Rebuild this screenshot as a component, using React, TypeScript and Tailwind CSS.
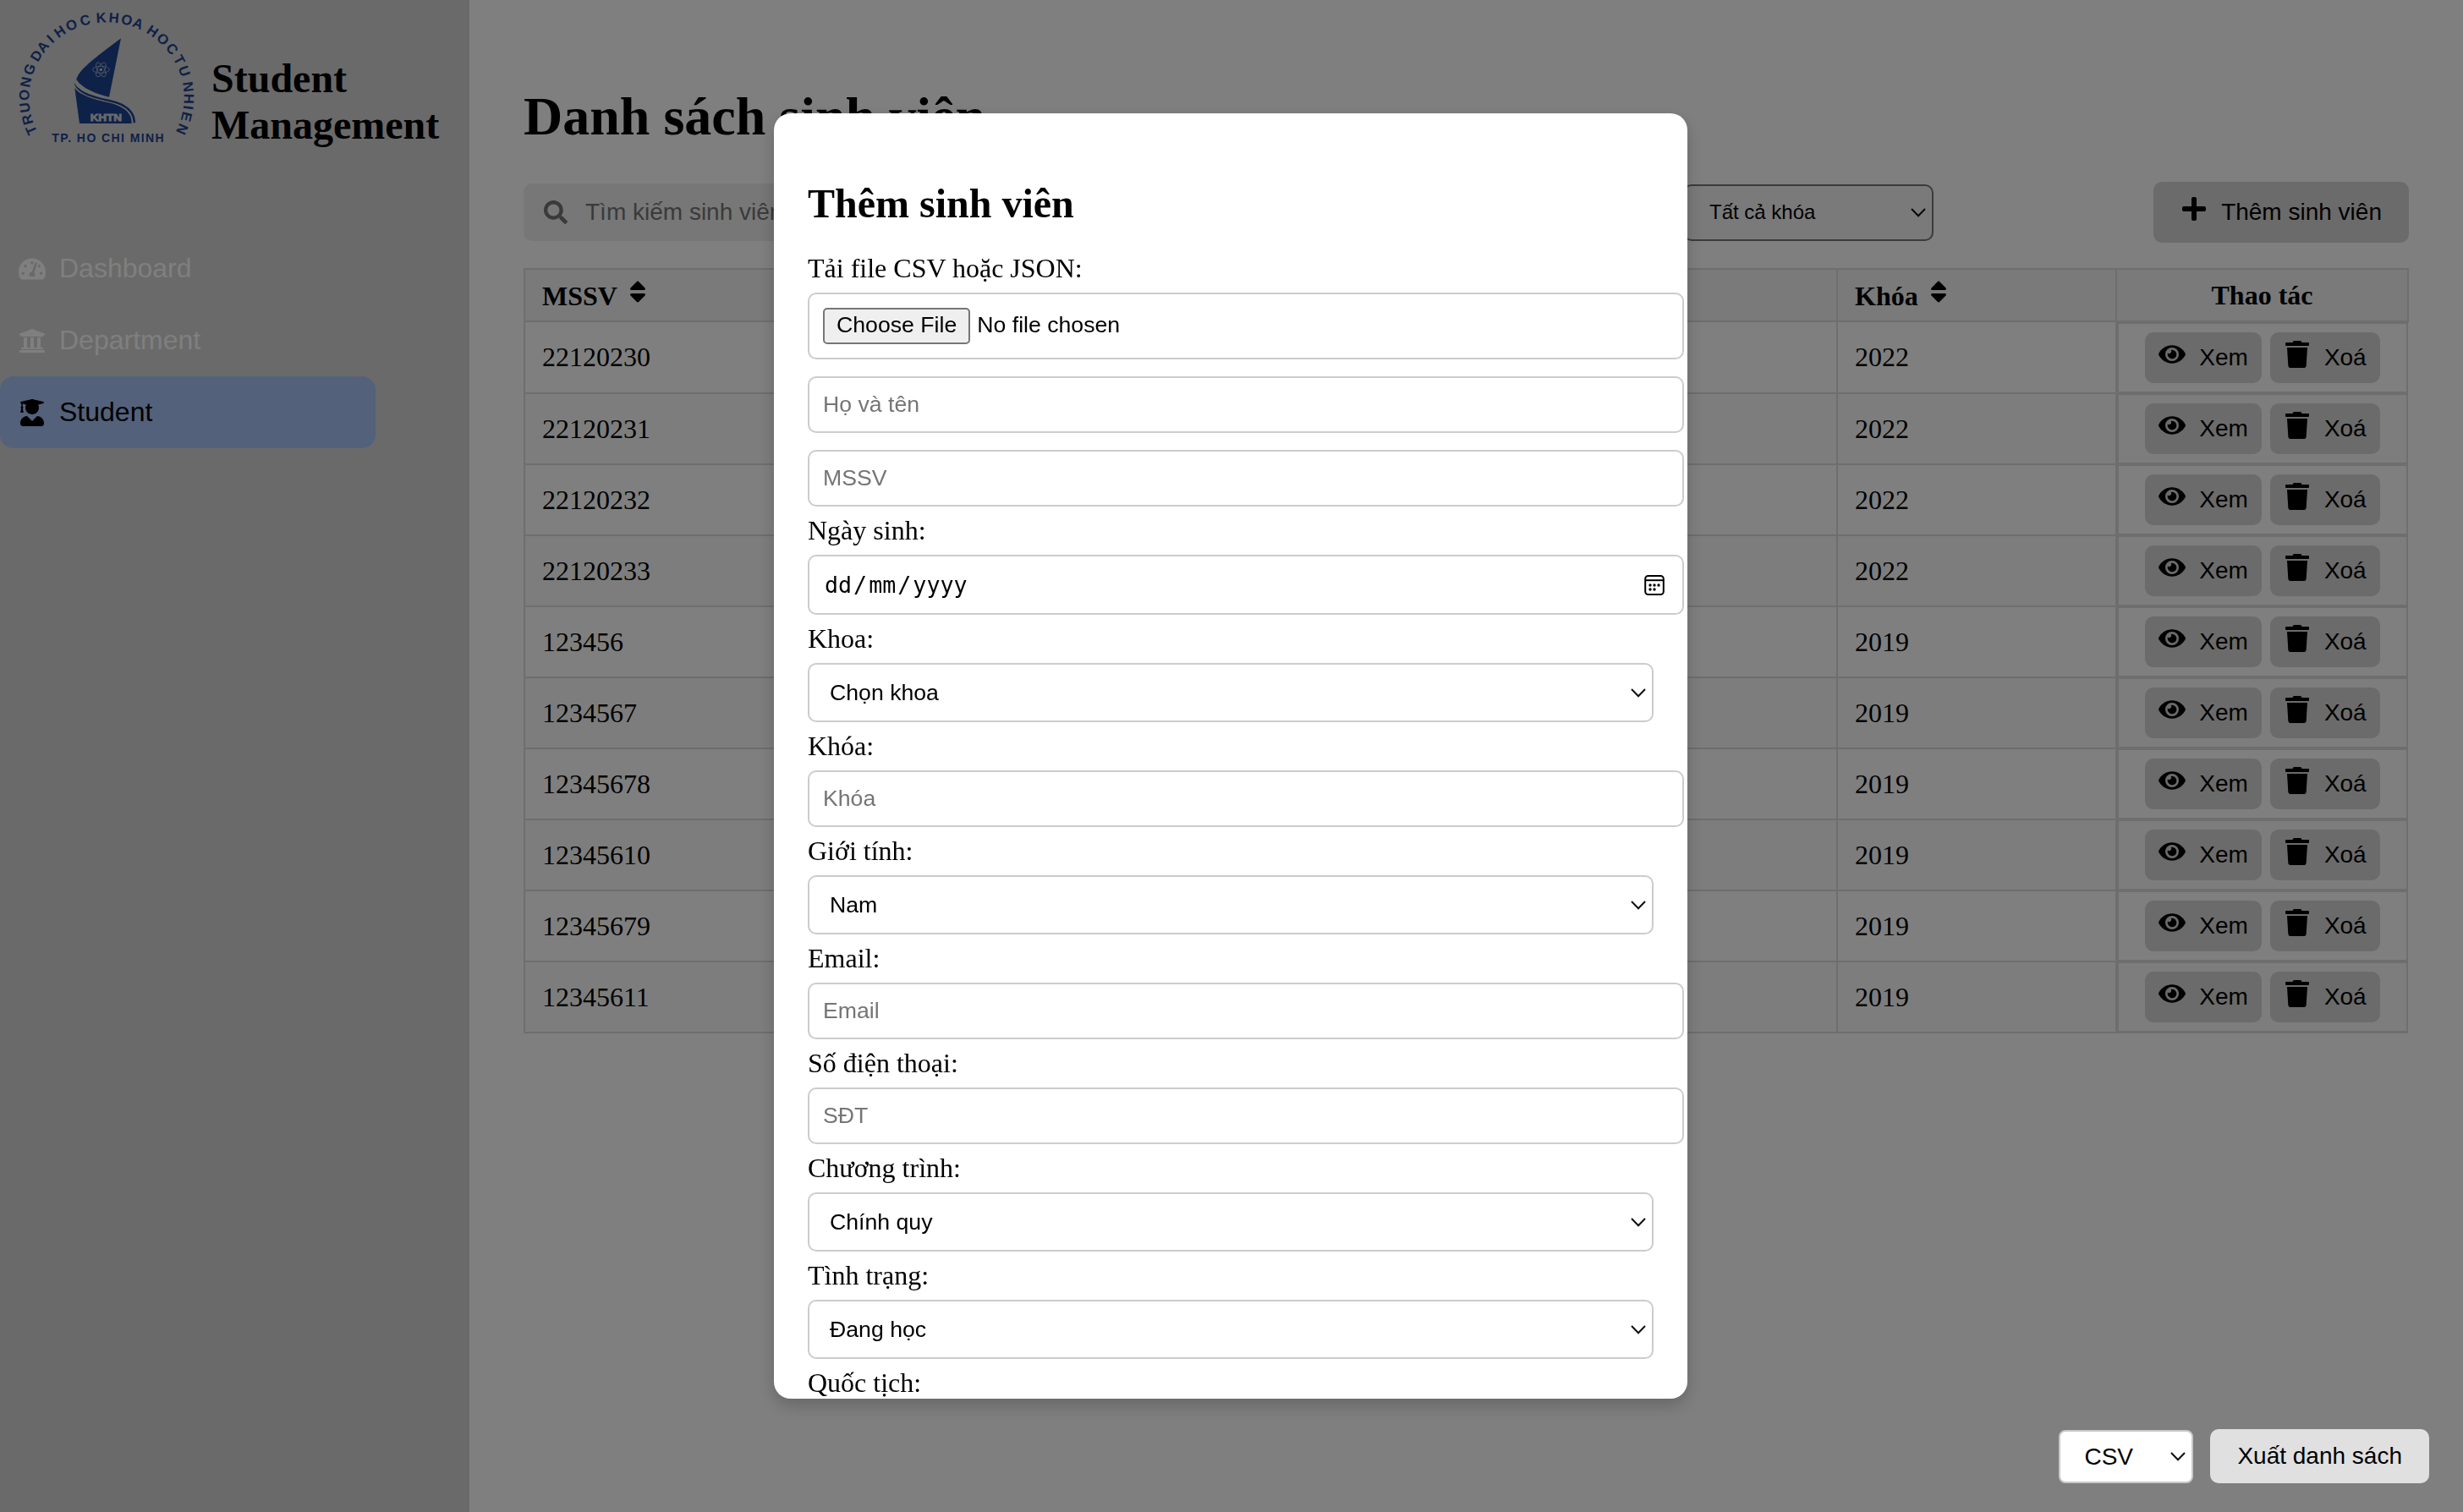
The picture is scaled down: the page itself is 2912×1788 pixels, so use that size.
import React from "react";
import {
  FaTachometerAlt,
  FaUniversity,
  FaUserGraduate,
  FaSearch,
  FaSort,
  FaPlus,
  FaEye,
  FaTrash,
} from "react-icons/fa";

const students = [
  { id: "22120230", year: "2022" },
  { id: "22120231", year: "2022" },
  { id: "22120232", year: "2022" },
  { id: "22120233", year: "2022" },
  { id: "123456", year: "2019" },
  { id: "1234567", year: "2019" },
  { id: "12345678", year: "2019" },
  { id: "12345610", year: "2019" },
  { id: "12345679", year: "2019" },
  { id: "12345611", year: "2019" },
];

const ARC_TEXT = "TRUONG DAI HOC KHOA HOC TU NHIEN";
// Angle of each glyph's centre, clockwise from the left end of the ring.
const ARC_ANGLES = [
  -24, -16.1, -7.3, 1.8, 11.2, 20.6, 26, 31.5, 39.4, 47, 51, 55.4, 64.8, 74.9, 80,
  86.3, 95.1, 104.3, 112.5, 118, 124, 133.2, 142.7, 147, 152, 160.8, 166, 172.4,
  181, 187.3, 193.8, 203.3,
];
const ADVANCE: Record<string, number> = {
  T: 0.611, R: 0.722, U: 0.722, O: 0.778, N: 0.722, G: 0.778, D: 0.722, A: 0.722,
  I: 0.278, H: 0.722, C: 0.722, K: 0.722, E: 0.667, " ": 0.278,
};

function Logo() {
  const size = 50;
  const glyphs = ARC_ANGLES.map((deg, i) => {
    const a = (deg * Math.PI) / 180;
    const rot = deg - 90;
    const r = (rot * Math.PI) / 180;
    const half = (ADVANCE[ARC_TEXT[i]] * size) / 2;
    return {
      x: 348 - 275 * Math.cos(a) - half * Math.cos(r),
      y: 331 - 267 * Math.sin(a) - half * Math.sin(r),
      rot,
    };
  });
  return (
    <svg
      viewBox="0 0 720 525"
      className="h-[175px] w-[240px] shrink-0 font-['Liberation_Sans',sans-serif] font-bold"
      fill="#1c4290"
    >
      <text
        fontSize={size}
        x={glyphs.map((g) => g.x.toFixed(1)).join(" ")}
        y={glyphs.map((g) => g.y.toFixed(1)).join(" ")}
        rotate={glyphs.map((g) => g.rot.toFixed(1)).join(" ")}
      >
        {ARC_TEXT}
      </text>
      <path d="M399 121 L357 329 C312 318 262 300 241 267 C248 235 300 195 399 121 Z" />
      <path d="M232 277 C248 310 302 328 357 338 C425 352 452 385 450 421 L443 421 C442 385 418 359 354 345 C298 333 240 318 232 277 Z" />
      <path d="M235 297 C252 322 300 337 350 348 C410 361 438 385 437 423 L252 423 Z" />
      <g stroke="#a9b8d4" strokeWidth="2.4" fill="none">
        <ellipse cx="328" cy="232" rx="30" ry="12" />
        <ellipse cx="328" cy="232" rx="28" ry="12" transform="rotate(60 328 232)" />
        <ellipse cx="328" cy="232" rx="28" ry="12" transform="rotate(120 328 232)" />
      </g>
      <circle cx="328" cy="232" r="5" fill="#c8d0e0" />
      <text
        x="290"
        y="414"
        fontSize="34"
        textLength="112"
        lengthAdjust="spacingAndGlyphs"
        fill="#d4d4d4"
        stroke="#d4d4d4"
        strokeWidth="2.5"
      >
        KHTN
      </text>
      <text x="154" y="488" fontSize="42" textLength="397">
        TP. HO CHI MINH
      </text>
    </svg>
  );
}

function Chevron() {
  return (
    <svg viewBox="0 0 18 11" className="h-[11px] w-[18px]" fill="none" stroke="#111" strokeWidth="2">
      <path d="M1 1 L9 9.3 L17 1" />
    </svg>
  );
}

function CalendarIcon() {
  return (
    <svg viewBox="0 0 24 24" className="size-6" fill="none" stroke="#000" strokeWidth="2">
      <rect x="1.2" y="1" width="21.6" height="22" rx="3.5" />
      <path d="M1 6.2 H23" />
      <g fill="#000" stroke="none">
        <circle cx="7" cy="12" r="1.7" />
        <circle cx="12" cy="12" r="1.7" />
        <circle cx="17" cy="12" r="1.7" />
        <circle cx="7" cy="17" r="1.7" />
        <circle cx="12" cy="17" r="1.7" />
      </g>
    </svg>
  );
}

function NavItem({ icon, label, active }: { icon: React.ReactNode; label: string; active?: boolean }) {
  return (
    <div
      className={
        "flex h-[85px] w-[444px] items-center gap-4 rounded-2xl pl-[22px] font-['Liberation_Sans',sans-serif] text-[32px] leading-[normal] " +
        (active ? "bg-[#a6c2f6] text-black" : "text-white")
      }
    >
      {icon}
      {label}
    </div>
  );
}

function Label({ children }: { children: React.ReactNode }) {
  return <div className="my-[10px] h-[37px] whitespace-nowrap text-[32px] leading-[37px]">{children}</div>;
}

const fieldFont = "font-['Liberation_Sans',sans-serif] text-[26.67px] leading-[normal]";

function TextField({ placeholder }: { placeholder: string }) {
  return (
    <input
      placeholder={placeholder}
      className={
        "block h-[67px] w-[1036px] rounded-[10px] border-2 border-[#ccc] bg-white px-4 placeholder:text-[#757575] placeholder:opacity-100 " +
        fieldFont
      }
    />
  );
}

function SelectField({ value }: { value: string }) {
  return (
    <div
      className={
        "flex h-[70px] w-[1000px] items-center justify-between rounded-[10px] border-2 border-[#ccc] bg-white pl-6 pr-[7px] " +
        fieldFont
      }
    >
      {value}
      <Chevron />
    </div>
  );
}

function ActionButton({ icon, label }: { icon: React.ReactNode; label: string }) {
  return (
    <button className="flex h-[60px] items-center gap-4 rounded-[10px] bg-[#d6d6d6] px-4 font-['Liberation_Sans',sans-serif] text-[28px] leading-[normal]">
      <span className="mb-2 text-[32px]">{icon}</span>
      {label}
    </button>
  );
}

const columns = "grid grid-cols-[1550px_330px_1fr]";

function StudentTable() {
  return (
    <div className="w-[2229px] text-[32px] leading-[normal]">
      <div className={columns + " h-16 border-2 border-[#dcdcdc] bg-[#f4f4f4] font-bold"}>
        <div className="flex items-center gap-2 pl-5">
          <span className="mt-[3px]">MSSV</span>
          <FaSort className="mb-2" />
        </div>
        <div className="flex items-center gap-2 border-l-2 border-[#dcdcdc] pl-5">
          <span className="mt-[3px]">Khóa</span>
          <FaSort className="mb-2" />
        </div>
        <div className="flex items-center justify-center border-l-2 border-[#dcdcdc]">Thao tác</div>
      </div>
      {students.map((s, i) => (
        <div
          key={s.id}
          className={
            columns +
            " w-[2228px] border-b-2 border-l-2 border-[#dcdcdc] " +
            (i === 0 ? "h-[85px] " : "h-[84px] ") +
            (i % 2 ? "bg-[#fafafa]" : "bg-white")
          }
        >
          <div className="flex items-center pl-5">{s.id}</div>
          <div className="flex items-center border-l-2 border-[#dcdcdc] pl-5">{s.year}</div>
          <div
            className={
              "flex items-start justify-center gap-[10px] border-b border-l-4 border-r-2 border-[#dcdcdc] pt-[10px] " +
              (i === 0 ? "border-t-2" : "border-t")
            }
          >
            <ActionButton icon={<FaEye />} label="Xem" />
            <ActionButton icon={<FaTrash />} label="Xoá" />
          </div>
        </div>
      ))}
    </div>
  );
}

function AddStudentModal() {
  return (
    <div className="fixed inset-0 flex items-center justify-center bg-black/50">
      <div className="mr-[2px] h-[1520px] w-[1080px] overflow-hidden rounded-[20px] bg-white px-10 pt-[79px] shadow-[0_8px_20px_rgba(0,0,0,0.2)]">
        <h2 className="mb-[31px] h-[55px] whitespace-nowrap text-[48px] font-bold leading-[55px]">Thêm sinh viên</h2>
        <Label>Tải file CSV hoặc JSON:</Label>
        <div
          className={
            "mb-5 flex h-[79px] w-[1036px] items-center gap-2 rounded-[10px] border-2 border-[#ccc] px-4 " + fieldFont
          }
        >
          <button className="h-[43px] rounded-[5px] border-2 border-[#767676] bg-[#efefef] px-[14px] pb-[2px] leading-[31px]">
            Choose File
          </button>
          <span className="mb-[2px]">No file chosen</span>
        </div>
        <div className="mb-5">
          <TextField placeholder="Họ và tên" />
        </div>
        <TextField placeholder="MSSV" />
        <Label>Ngày sinh:</Label>
        <div className="flex h-[71px] w-[1036px] items-center justify-between rounded-[10px] border-2 border-[#ccc] pl-4 pr-[21px] font-['DejaVu_Sans_Mono',monospace] text-[26.67px] leading-[normal]">
          <div className="flex">
            <span className="px-[2px]">dd</span>/<span className="px-[2px]">mm</span>/
            <span className="px-[2px]">yyyy</span>
          </div>
          <CalendarIcon />
        </div>
        <Label>Khoa:</Label>
        <SelectField value="Chọn khoa" />
        <Label>Khóa:</Label>
        <TextField placeholder="Khóa" />
        <Label>Giới tính:</Label>
        <SelectField value="Nam" />
        <Label>Email:</Label>
        <TextField placeholder="Email" />
        <Label>Số điện thoại:</Label>
        <TextField placeholder="SĐT" />
        <Label>Chương trình:</Label>
        <SelectField value="Chính quy" />
        <Label>Tình trạng:</Label>
        <SelectField value="Đang học" />
        <Label>Quốc tịch:</Label>
      </div>
    </div>
  );
}

export default function App() {
  return (
    <div className="flex h-[1788px] w-[2912px] overflow-hidden bg-white font-['Liberation_Serif',serif] text-black">
      <aside className="w-[555px] shrink-0 bg-[#d4d4d4]">
        <div className="flex h-[275px] pl-[10px] pt-[5px]">
          <Logo />
          <div className="mt-[60px] text-[48px] font-bold leading-[55px]">
            Student
            <br />
            Management
          </div>
        </div>
        <NavItem icon={<FaTachometerAlt />} label="Dashboard" />
        <NavItem icon={<FaUniversity />} label="Department" />
        <NavItem icon={<FaUserGraduate />} label="Student" active />
      </aside>

      <main className="pl-16 pt-[101px]">
        <h1 className="h-[114px] text-[64px] font-bold leading-[73px]">Danh sách sinh viên</h1>
        <div className="mb-[30px] flex h-[72px] w-[2229px] items-center font-['Liberation_Sans',sans-serif] text-[28px] leading-[normal]">
          <div className="flex h-[68px] w-[800px] items-center gap-[21px] rounded-[10px] bg-[#eee] pl-6 text-[#757575]">
            <FaSearch />
            Tìm kiếm sinh viên
          </div>
          <div className="ml-[571px] flex h-[67px] w-[296px] items-center justify-between rounded-[10px] border-2 border-[#767676] bg-[#f4f4f4] pl-[29px] pr-[7px] text-[24px]">
            Tất cả khóa
            <Chevron />
          </div>
          <button className="ml-auto flex h-[72px] items-center gap-4 rounded-[10px] bg-[#d6d6d6] px-8">
            <FaPlus className="mb-2 text-[32px]" />
            Thêm sinh viên
          </button>
        </div>
        <StudentTable />
      </main>

      <AddStudentModal />

      <div className="fixed bottom-[34px] right-10 flex items-end gap-5 font-['Liberation_Sans',sans-serif] text-[28px] leading-[normal]">
        <div className="flex h-[63px] w-[159px] items-center justify-between rounded-[8px] border-2 border-[#c8c8c8] bg-white pl-7 pr-[7px]">
          CSV
          <Chevron />
        </div>
        <button className="h-16 rounded-[10px] bg-[#e0e0e0] px-8">Xuất danh sách</button>
      </div>
    </div>
  );
}
